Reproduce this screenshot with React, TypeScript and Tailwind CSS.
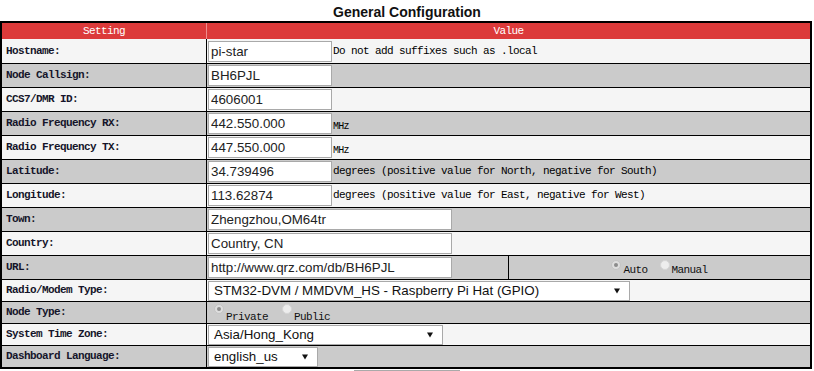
import React from 'react';

const mono = "font-['Liberation_Mono',monospace] text-[11px] leading-[13px] tracking-[-0.6px]";
const sans = "font-['Liberation_Sans',Arial,sans-serif] text-[13.33px]";

function Select({ value, className }: { value: string; className: string }) {
  return (
    <div
      role="combobox"
      className={'flex h-[20px] shrink-0 items-center justify-between border border-[#a9a9a9] bg-white pl-[5px] pr-[9px] leading-4 text-[#111] ' + sans + ' ' + className}
    >
      <span>{value}</span>
      <svg width="6" height="6" viewBox="0 0 6 6">
        <path d="M0 0.5H6L3 5.5Z" fill="#111" />
      </svg>
    </div>
  );
}

function Field({ value, className }: { value: string; className: string }) {
  return (
    <input
      readOnly
      value={value}
      className={'h-[21px] shrink-0 border border-[#a9a9a9] bg-white px-[2px] text-[#222] outline-none ' + sans + ' ' + className}
    />
  );
}

function Radio({ checked, label, textTop }: { checked?: boolean; label: string; textTop: string }) {
  return (
    <span className="flex items-start">
      {checked ? (
        <span className="mt-px flex h-[10px] w-[10px] items-center justify-center rounded-full border border-[#c4c4c4] bg-[#dedede]">
          <span className="h-[4px] w-[4px] rounded-full bg-[#8c8c8c]" />
        </span>
      ) : (
        <span className="mt-px h-[10px] w-[10px] rounded-full border border-[#d6d6d6] bg-[#ededed]" />
      )}
      <span className={'ml-[2px] text-[#111] ' + mono + ' ' + textTop}>{label}</span>
    </span>
  );
}

type Row = { label: string; h: string; body: React.ReactNode; split?: React.ReactNode };

const rows: Row[] = [
  {
    label: 'Hostname:',
    h: 'h-[25px]',
    body: (
      <>
        <Field value="pi-star" className="w-[124px]" />
        <span className={'ml-px text-black ' + mono}>Do not add suffixes such as .local</span>
      </>
    ),
  },
  { label: 'Node Callsign:', h: 'h-[24px]', body: <Field value="BH6PJL" className="w-[124px]" /> },
  { label: 'CCS7/DMR ID:', h: 'h-[24px]', body: <Field value="4606001" className="w-[124px]" /> },
  {
    label: 'Radio Frequency RX:',
    h: 'h-[24px]',
    body: (
      <>
        <Field value="442.550.000" className="w-[124px]" />
        <span className="ml-px mt-[5px] font-['Liberation_Mono',monospace] text-[10px] tracking-[-0.8px] text-black">MHz</span>
      </>
    ),
  },
  {
    label: 'Radio Frequency TX:',
    h: 'h-[24px]',
    body: (
      <>
        <Field value="447.550.000" className="w-[124px]" />
        <span className="ml-px mt-[5px] font-['Liberation_Mono',monospace] text-[10px] tracking-[-0.8px] text-black">MHz</span>
      </>
    ),
  },
  {
    label: 'Latitude:',
    h: 'h-[24px]',
    body: (
      <>
        <Field value="34.739496" className="w-[124px]" />
        <span className={'ml-px text-black ' + mono}>degrees (positive value for North, negative for South)</span>
      </>
    ),
  },
  {
    label: 'Longitude:',
    h: 'h-[24px]',
    body: (
      <>
        <Field value="113.62874" className="w-[124px]" />
        <span className={'ml-px text-black ' + mono}>degrees (positive value for East, negative for West)</span>
      </>
    ),
  },
  { label: 'Town:', h: 'h-[24px]', body: <Field value="Zhengzhou,OM64tr" className="w-[244px]" /> },
  { label: 'Country:', h: 'h-[24px]', body: <Field value="Country, CN" className="w-[244px]" /> },
  {
    label: 'URL:',
    h: 'h-[24px]',
    body: <Field value="http://www.qrz.com/db/BH6PJL" className="w-[244px]" />,
    split: (
      <div className="flex h-full flex-1 items-start justify-center gap-[12px] pt-[3px]">
        <Radio checked label="Auto" textTop="mt-[5px]" />
        <Radio label="Manual" textTop="mt-[5px]" />
      </div>
    ),
  },
  {
    label: 'Radio/Modem Type:',
    h: 'h-[22px]',
    body: <Select value="STM32-DVM / MMDVM_HS - Raspberry Pi Hat (GPIO)" className="w-[422px]" />,
  },
  {
    label: 'Node Type:',
    h: 'h-[22px]',
    body: (
      <div className="flex h-full items-start gap-[14px] pl-[6px] pt-px">
        <Radio checked label="Private" textTop="mt-[8px]" />
        <Radio label="Public" textTop="mt-[8px]" />
      </div>
    ),
  },
  { label: 'System Time Zone:', h: 'h-[22px]', body: <Select value="Asia/Hong_Kong" className="w-[235px]" /> },
  { label: 'Dashboard Language:', h: 'h-[21px]', body: <Select value="english_us" className="w-[110px]" /> },
];

export default function App() {
  return (
    <div className="w-[814px] bg-white">
      <div className="h-[21px] pt-[4px] text-center font-['Liberation_Sans',Arial,sans-serif] text-[14px] font-bold leading-4 text-[#111]">
        General Configuration
      </div>

      <div className="w-[812px] border-2 border-black">
        <div className="flex h-[16px] bg-[#dc3a3a] text-white">
          <div className={'flex w-[205px] shrink-0 items-center justify-center border-r border-[#ee8c8c] ' + mono}>Setting</div>
          <div className={'flex flex-1 items-center justify-center ' + mono}>Value</div>
        </div>

        {rows.map((r, i) => (
          <div
            key={r.label}
            className={
              'flex ' +
              r.h +
              (i < rows.length - 1 ? ' border-b border-black' : '') +
              (i % 2 === 0 ? ' bg-[#f5f5f5]' : ' bg-[#cbcbcb]')
            }
          >
            <div className={'flex w-[205px] shrink-0 items-center border-r border-black pl-[4px] font-bold text-[#15152a] ' + mono}>
              {r.label}
            </div>
            {r.split ? (
              <>
                <div className="flex w-[302px] shrink-0 items-center border-r border-black pl-px">{r.body}</div>
                {r.split}
              </>
            ) : (
              <div className="flex flex-1 items-center pl-px">{r.body}</div>
            )}
          </div>
        ))}
      </div>

      {/* only the top edge of the submit button shows in the frame */}
      <div className="flex justify-center pt-px">
        <button aria-label="Apply Changes" className="h-[24px] w-[106px] border border-[#a9a9a9] bg-[#efefef]" />
      </div>
    </div>
  );
}
